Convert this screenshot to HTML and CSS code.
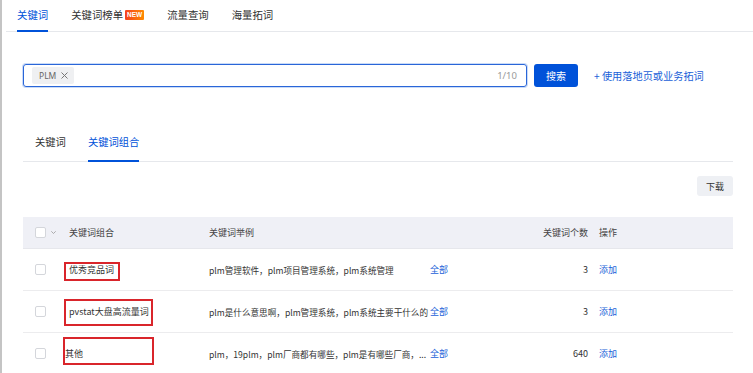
FILE: index.html
```html
<!DOCTYPE html>
<html lang="zh-CN">
<head>
<meta charset="utf-8">
<title>关键词</title>
<link rel="stylesheet" href="styles.css">
</head>
<body>
<div class="page">
  <nav class="top-tabs">
    <div class="top-tab active">关键词</div>
    <div class="top-tab">关键词榜单<span class="badge-new">NEW</span></div>
    <div class="top-tab">流量查询</div>
    <div class="top-tab">海量拓词</div>
  </nav>

  <div class="content">
    <div class="search-row">
      <div class="search-input">
        <span class="tag">PLM
          <svg class="tag-x" width="7" height="7" viewBox="0 0 7 7"><path d="M0.5 0.5L6.5 6.5M6.5 0.5L0.5 6.5" stroke="#777" stroke-width="1" fill="none"/></svg>
        </span>
        <span class="counter">1/10</span>
      </div>
      <button class="btn-search">搜索</button>
      <a class="link-extend">+ 使用落地页或业务拓词</a>
    </div>

    <nav class="sub-tabs">
      <div class="sub-tab">关键词</div>
      <div class="sub-tab active">关键词组合</div>
    </nav>

    <div class="toolbar">
      <button class="btn-download">下载</button>
    </div>

    <div class="table">
      <div class="tr thead">
        <div class="td c0"><span class="checkbox"></span>
          <svg class="chev" width="5" height="3" viewBox="0 0 5 3"><path d="M0.3 0.3L2.5 2.5L4.7 0.3" stroke="#999" stroke-width="0.8" fill="none"/></svg>
        </div>
        <div class="td c1">关键词组合</div>
        <div class="td c2">关键词举例</div>
        <div class="td c3"></div>
        <div class="td c4">关键词个数</div>
        <div class="td c5">操作</div>
      </div>
      <div class="tr">
        <div class="td c0"><span class="checkbox"></span></div>
        <div class="td c1"><span class="mark mark-1"></span>优秀竞品词</div>
        <div class="td c2 ex">plm管理软件，plm项目管理系统，plm系统管理</div>
        <div class="td c3"><a class="link">全部</a></div>
        <div class="td c4">3</div>
        <div class="td c5"><a class="link">添加</a></div>
      </div>
      <div class="tr">
        <div class="td c0"><span class="checkbox"></span></div>
        <div class="td c1"><span class="mark mark-2"></span>pvstat大盘高流量词</div>
        <div class="td c2 ex">plm是什么意思啊，plm管理系统，plm系统主要干什么的</div>
        <div class="td c3"><a class="link">全部</a></div>
        <div class="td c4">3</div>
        <div class="td c5"><a class="link">添加</a></div>
      </div>
      <div class="tr">
        <div class="td c0"><span class="checkbox"></span></div>
        <div class="td c1"><span class="mark mark-3"></span><span class="shift">其他</span></div>
        <div class="td c2 ex">plm，19plm，plm厂商都有哪些，plm是有哪些厂商，...</div>
        <div class="td c3"><a class="link">全部</a></div>
        <div class="td c4">640</div>
        <div class="td c5"><a class="link">添加</a></div>
      </div>
    </div>
  </div>
</div>
</body>
</html>
```

FILE: styles.css
```css
* { box-sizing: border-box; }

html, body {
  margin: 0;
  padding: 0;
  background: #fff;
}

body {
  font-family: "Noto Sans CJK SC", "Noto Sans", sans-serif;
  color: #333;
  overflow: hidden;
}

.page {
  border-left: 2px solid #c4c4c4;
  min-height: 100vh;
}

/* top tabs */
.top-tabs {
  margin-left: 4px;
  padding-left: 11px;
  display: flex;
  gap: 23px;
  height: 32px;
  border-bottom: 1px solid #e6e8ec;
}

.top-tab {
  display: flex;
  align-items: center;
  height: 32px;
  margin-bottom: -1px;
  padding-bottom: 1px;
  font-size: 10.4px;
  color: #333;
  border-bottom: 2px solid transparent;
}

.top-tab.active {
  color: #0052d9;
  border-bottom-color: #0052d9;
}

.badge-new {
  margin-left: 2px;
  display: inline-flex;
  align-items: center;
  justify-content: center;
  width: 19px;
  height: 10px;
  border-radius: 1px;
  background: linear-gradient(90deg, #f5401f, #ff8a00);
  color: #fff;
  font-family: "Liberation Sans", sans-serif;
  font-weight: bold;
  font-size: 6.5px;
  line-height: 10px;
}

.content {
  padding: 0 20px 0 21px;
}

/* search */
.search-row {
  margin-top: 32px;
  display: flex;
  align-items: center;
  height: 23px;
}

.search-input {
  width: 504px;
  height: 23px;
  border: 1px solid #2a66d8;
  border-radius: 3px;
  box-shadow: 0 0 0 1px #c9dbf8;
  display: flex;
  align-items: center;
  justify-content: space-between;
  padding: 0 8px 0 8px;
}

.tag {
  display: inline-flex;
  align-items: center;
  gap: 5px;
  height: 17px;
  padding: 0 6px 0 7px;
  background: #eff0f2;
  border-radius: 2px;
  font-family: "Noto Sans", sans-serif;
  font-size: 8.5px;
  color: #666;
}

.tag-x { display: block; }

.counter {
  font-family: "Noto Sans", sans-serif;
  font-size: 9.5px;
  color: #999;
  padding-right: 1px;
}

.btn-search {
  margin-left: 7px;
  width: 44px;
  height: 23px;
  border: none;
  border-radius: 3px;
  background: #0052d9;
  color: #fff;
  font-family: inherit;
  font-size: 10px;
  padding: 0;
}

.link-extend {
  margin-left: 16px;
  font-size: 10.2px;
  color: #1a5fd8;
}

/* sub tabs */
.sub-tabs {
  margin-top: 38px;
  display: flex;
  gap: 22px;
  padding-left: 12px;
  height: 37px;
  border-bottom: 1px solid #e6e8ec;
}

.sub-tab {
  display: flex;
  align-items: center;
  height: 37px;
  margin-bottom: -1px;
  padding-bottom: 2px;
  font-size: 10.3px;
  color: #333;
  border-bottom: 2px solid transparent;
}

.sub-tab.active {
  color: #0052d9;
  border-bottom-color: #0052d9;
}

/* toolbar */
.toolbar {
  margin-top: 14px;
  display: flex;
  justify-content: flex-end;
}

.btn-download {
  width: 36px;
  height: 20px;
  border: none;
  border-radius: 3px;
  background: #eef0f4;
  color: #333;
  font-family: inherit;
  font-size: 9px;
  padding: 0;
}

/* table */
.table {
  margin-top: 21px;
  font-size: 9px;
}

.tr {
  display: grid;
  grid-template-columns: 46px 140px 221px 60px 98px 1fr;
  height: 42px;
  border-bottom: 1px solid #ececee;
  align-items: center;
}

.tr.thead {
  height: 32px;
  background: #eff0f6;
  border-bottom: 1px solid #e6e7ec;
  color: #444;
}

.td {
  white-space: nowrap;
  display: flex;
  align-items: center;
  height: 100%;
}

.c0 {
  padding-left: 12px;
  gap: 5px;
}

.c1 { position: relative; }

.c2.ex {
  font-size: 8.6px;
  overflow: hidden;
}

.c4 {
  justify-content: flex-end;
}

.c5 {
  padding-left: 11px;
}

.checkbox {
  display: inline-block;
  width: 11px;
  height: 11px;
  border: 1px solid #d4d6db;
  border-radius: 2px;
  background: #fff;
}

.chev { display: block; }

.link {
  color: #1a5fd8;
}

.shift {
  margin-left: -4px;
}

/* annotation boxes */
.mark {
  position: absolute;
  border: 2px solid #d9252b;
  pointer-events: none;
}

.mark-1 {
  left: -5px;
  top: 13px;
  width: 56px;
  height: 19px;
}

.mark-2 {
  left: -5px;
  top: 8px;
  width: 89px;
  height: 27px;
}

.mark-3 {
  left: -6px;
  top: 4px;
  width: 91px;
  height: 28px;
}
```
